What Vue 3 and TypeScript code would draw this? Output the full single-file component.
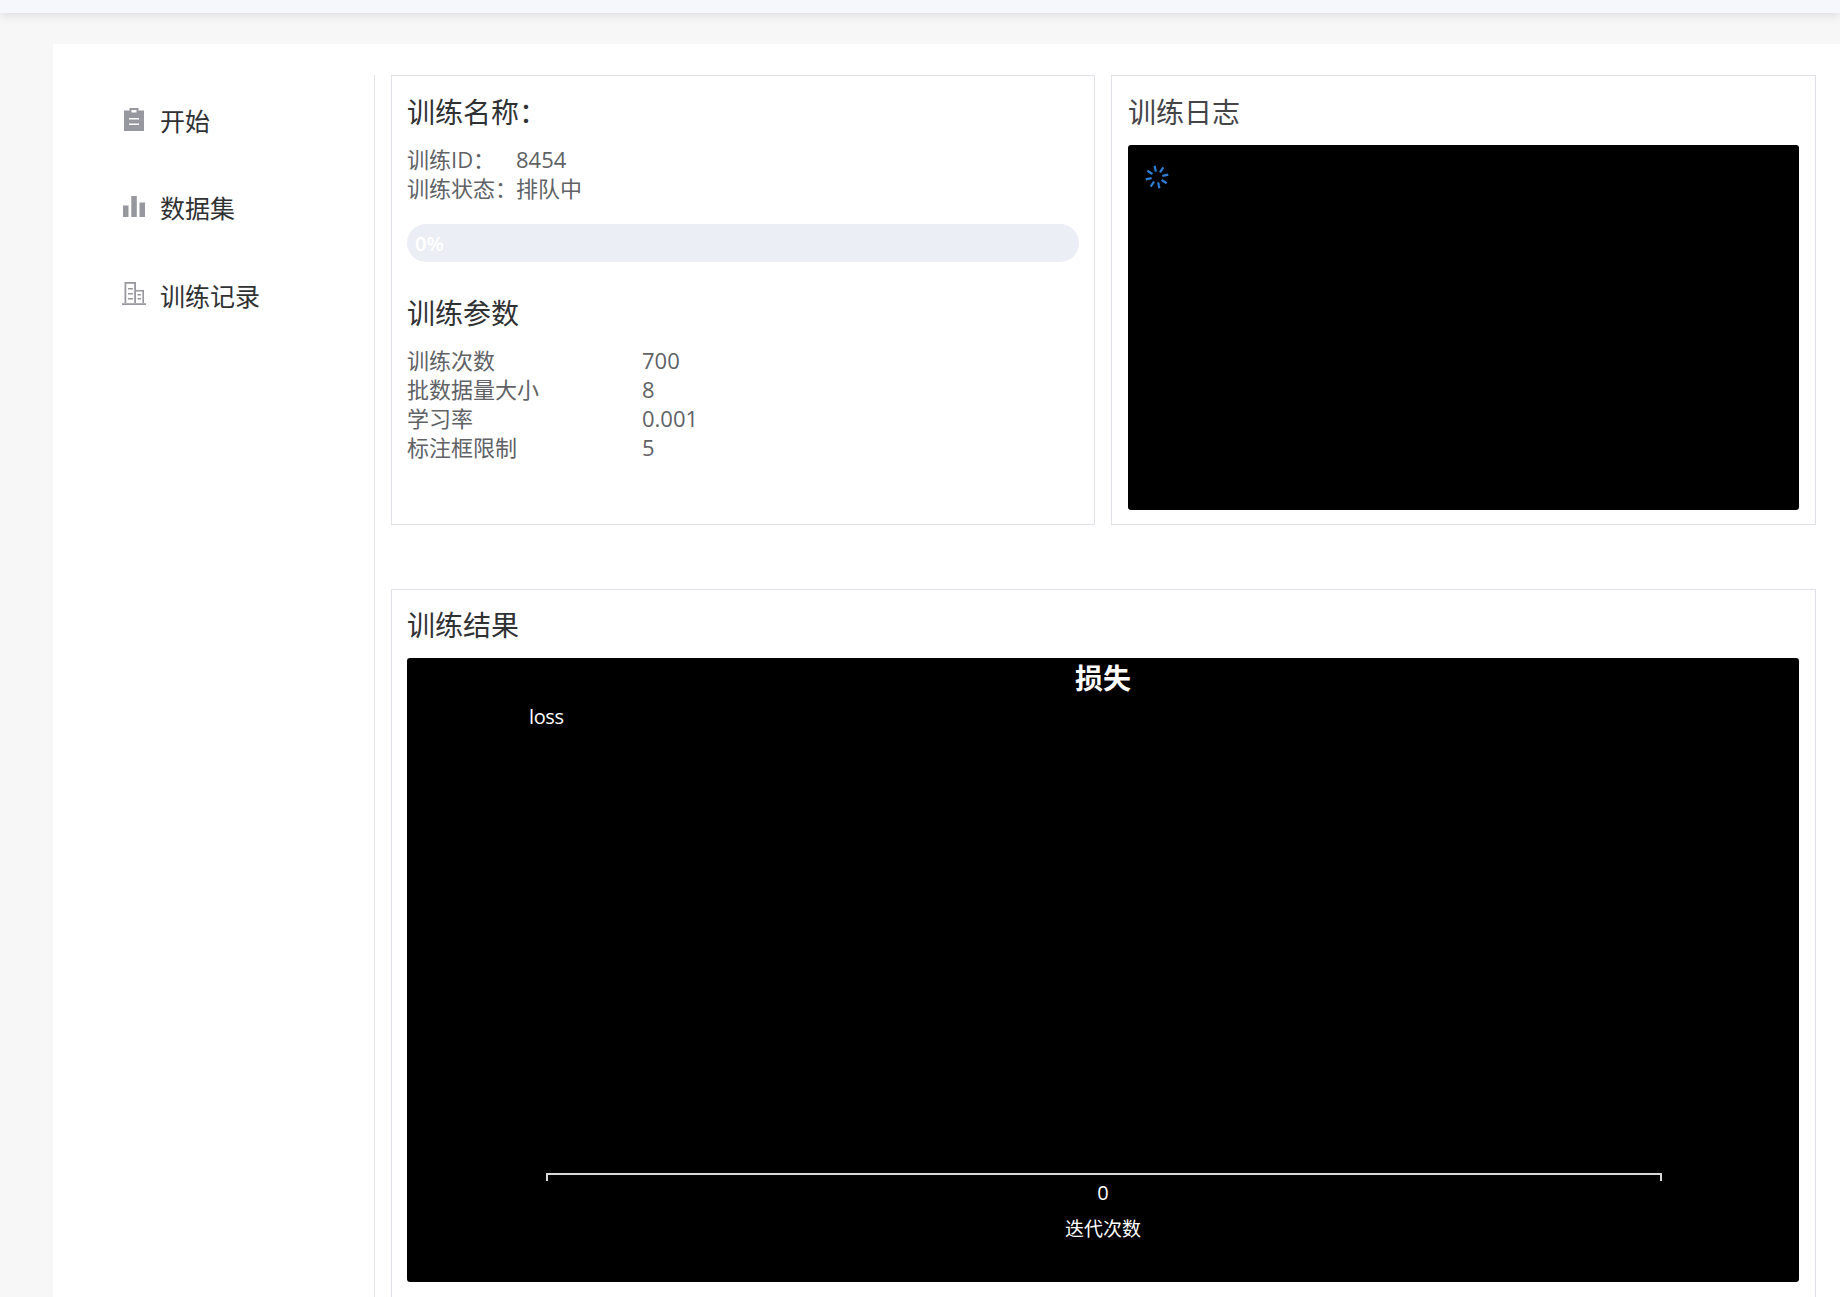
<script setup lang="ts">
interface NavItem { key: string; label: string }
interface Param { label: string; value: string }

const navItems: NavItem[] = [
  { key: 'start', label: '开始' },
  { key: 'data', label: '数据集' },
  { key: 'records', label: '训练记录' },
]
const params: Param[] = [
  { label: '训练次数', value: '700' },
  { label: '批数据量大小', value: '8' },
  { label: '学习率', value: '0.001' },
  { label: '标注框限制', value: '5' },
]
const spokes: number[] = [0, 45, 90, 135, 180, 225, 270, 315]
</script>

<template>
  <div class="page">
    <header class="topbar"></header>
    <main class="main">
      <div class="card">
        <nav class="sidebar">
          <a v-for="item in navItems" :key="item.key" class="nav-item">
            <svg class="nav-icon" viewBox="0 0 24 24" aria-hidden="true">
              <template v-if="item.key === 'start'">
                <path class="solid" fill-rule="evenodd" transform="translate(0 -1)" d="M2 3.500h5.500V1h9v2.500H22V24H2V3.500zM9.500 3v2.600h5V3h-5zM7 11v1.600h10V11H7zm0 5.500v1.600h10v-1.600H7z" />
              </template>
              <template v-else-if="item.key === 'data'">
                <path class="solid" d="M1 10.500h5.500V22H1zM9.300 1h5.500v21H9.300zM17.500 7.500H23V22h-5.500z" />
              </template>
              <template v-else>
                <path class="solid" fill-rule="evenodd" transform="translate(0 -2)" d="M0 22.200h24V24H0zM2.500 1h11.500v21.500h-1.800V2.800H4.300v19.700H2.500zM14 9h8v13.500h-1.600V10.600H14zM6 7h5v1.500H6zM6 12h5v1.500H6zM6 17h5v1.500H6zM15.500 13h3.500v1.400h-3.500zM15.500 17h3.500v1.400h-3.500z" />
              </template>
            </svg>
            <span>{{ item.label }}</span>
          </a>
        </nav>

        <section class="content">
          <div class="top-row">
            <article class="panel panel-info">
              <h3 class="title">训练名称：</h3>
              <div class="info-row"><span class="info-label">训练ID：</span><span>8454</span></div>
              <div class="info-row"><span class="info-label">训练状态：</span><span>排队中</span></div>
              <div class="progress"><span class="progress-text">0%</span></div>
              <h3 class="title params-title">训练参数</h3>
              <div v-for="p in params" :key="p.label" class="param-row">
                <span class="param-label">{{ p.label }}</span><span>{{ p.value }}</span>
              </div>
            </article>

            <article class="panel panel-log">
              <h3 class="title muted">训练日志</h3>
              <div class="log">
                <svg class="spinner" viewBox="0 0 24 24" aria-hidden="true">
                  <line v-for="a in spokes" :key="a" x1="12" y1="0.500" x2="12" y2="6.500" :transform="`rotate(${a - 12} 12 12)`" />
                </svg>
              </div>
            </article>
          </div>

          <article class="panel result">
            <h3 class="title">训练结果</h3>
            <div class="chart">
              <div class="chart-title">损失</div>
              <div class="chart-legend">loss</div>
              <div class="axis"></div>
              <div class="axis-tick">0</div>
              <div class="axis-name">迭代次数</div>
            </div>
          </article>
        </section>
      </div>
    </main>
  </div>
</template>

<style>
html, body { margin: 0; overflow: hidden; background: #f7f7f7; }
</style>

<style scoped>
.page {
  height: 1297px;
  overflow: hidden;
  background: #f7f7f7;
  font-family: "Open Sans", "Noto Sans CJK SC", sans-serif;
  display: flex;
  flex-direction: column;
}
.topbar {
  flex: none;
  height: 13px;
  background: #f5f7fc;
  box-shadow: 0 1px 12px rgba(0, 0, 0, 0.14);
}
.main {
  flex: 1;
  padding: 31px 0 0 53px;
}
.card {
  height: 100%;
  background: #fff;
  padding: 31px 24px 0 0;
  box-sizing: border-box;
  display: flex;
}
.sidebar {
  flex: none;
  width: 322px;
  box-sizing: border-box;
  padding: 1px 0 0 69px;
  border-right: 1px solid #e4e4e8;
  margin-right: 16px;
}
.nav-item {
  height: 87.5px;
  display: flex;
  align-items: center;
  font-size: 25px;
  color: #303133;
}
.nav-icon {
  flex: none;
  width: 24px;
  height: 24px;
  margin-right: 14px;
  overflow: visible;
}
.solid { fill: #97979f; }
.content {
  flex: 1;
  min-width: 0;
}
.top-row {
  display: grid;
  grid-template-columns: 704px 1fr;
  gap: 16px;
  height: 450px;
}
.panel {
  box-sizing: border-box;
  border: 1px solid #e0e0e6;
  padding: 15px 16px 14px 15px;
  display: flex;
  flex-direction: column;
  min-width: 0;
}
.panel-info { padding-right: 15px; }
.panel-log { padding-left: 16px; }
.title {
  margin: 0 0 12px;
  font-size: 28px;
  font-weight: 400;
  line-height: 42px;
  color: #303133;
}
.title.muted { color: #454548; }
.info-row, .param-row {
  display: flex;
  font-size: 22px;
  line-height: 29px;
  color: #606266;
  white-space: nowrap;
}
.info-label { flex: none; width: 109px; }
.param-label { flex: none; width: 235px; }
.progress {
  margin-top: 21px;
  height: 38px;
  flex: none;
  border-radius: 19px;
  background: #ebeef5;
  display: flex;
  align-items: center;
  padding-left: 8px;
}
.progress-text {
  color: #fff;
  font-size: 20px;
  font-weight: 600;
}
.params-title { margin-top: 30px; }
.log {
  flex: 1;
  background: #000;
  border-radius: 3px;
  padding: 20px 17px;
}
.spinner {
  display: block;
  width: 24px;
  height: 24px;
  stroke: #2d7fd6;
  stroke-width: 2.200;
}
.result {
  margin-top: 64px;
  padding-top: 14px;
  height: 760px;
}
.chart {
  position: relative;
  height: 624px;
  flex: none;
  background: #000;
  border-radius: 3px;
  color: #fff;
}
.chart-title {
  position: absolute;
  top: 0;
  left: 0;
  right: 0;
  text-align: center;
  font-size: 28px;
  font-weight: 700;
  line-height: 40px;
}
.chart-legend {
  position: absolute;
  left: 122px;
  top: 46px;
  font-size: 20px;
  letter-spacing: -0.4px;
  line-height: 26px;
}
.axis {
  position: absolute;
  left: 139px;
  width: 1116px;
  top: 515px;
  height: 8px;
  box-sizing: border-box;
  border: 2px solid #d8d8d8;
  border-bottom: 0;
}
.axis-tick, .axis-name {
  position: absolute;
  left: 0;
  right: 0;
  text-align: center;
  line-height: 26px;
}
.axis-tick { top: 522px; font-size: 20px; }
.axis-name { top: 558px; font-size: 19px; }
</style>
